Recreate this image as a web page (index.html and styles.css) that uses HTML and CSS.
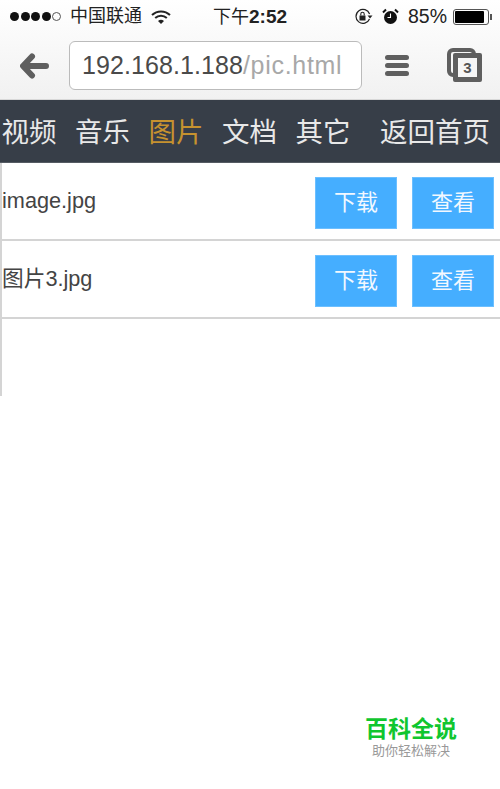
FILE: index.html
```html
<!DOCTYPE html>
<html lang="zh-CN">
  <head>
    <meta charset="utf-8" />
    <meta name="viewport" content="width=device-width, initial-scale=1" />
    <title>图片</title>
    <link rel="stylesheet" href="styles.css">
  </head>
  <body>
    <div class="browser-top">
      <!-- status bar -->
      <div class="status">
        <div class="status-left">
          <span class="signal"><i></i><i></i><i></i><i></i><i class="off"></i></span>
          <span class="carrier">中国联通</span>
          <svg class="wifi" width="20" height="14" viewBox="0 0 20 14">
            <path d="M1 5 A13 13 0 0 1 19 5" fill="none" stroke="#222" stroke-width="2" />
            <path d="M4.2 8 A8.5 8.5 0 0 1 15.8 8" fill="none" stroke="#222" stroke-width="2" />
            <path d="M7 11 A4.5 4.5 0 0 1 13 11 L10 14 Z" fill="#222" />
          </svg>
        </div>
        <div class="clock">下午<b>2:52</b></div>
        <div class="status-right">
          <svg width="19" height="17" viewBox="0 0 19 17">
            <path d="M15.5 11 A7 7 0 1 1 15.6 6" fill="none" stroke="#222" stroke-width="1.2" />
            <path d="M13.5 7.5 L18.5 7.5 L16 10.5 Z" fill="#222" />
            <rect x="5.5" y="7.5" width="6" height="5" fill="#222" />
            <path d="M6.8 7.5 V6 A1.7 1.7 0 0 1 10.2 6 V7.5" fill="none" stroke="#222" stroke-width="1.1" />
          </svg>
          <svg class="alarm" width="17" height="17" viewBox="0 0 17 17">
            <circle cx="8.5" cy="9.5" r="6.5" fill="#111" />
            <path d="M8.5 5.5 V9.5 H5.5" fill="none" stroke="#fff" stroke-width="1.1" />
            <path d="M1 4.5 L4 1.5 M16 4.5 L13 1.5" stroke="#111" stroke-width="2" />
          </svg>
          <span class="percent">85%</span>
          <span class="battery"><span class="level"></span></span>
          <span class="battery-tip"></span>
        </div>
      </div>
      <!-- address bar -->
      <div class="toolbar">
        <svg class="back" width="30" height="26" viewBox="0 0 30 26">
          <path d="M12 3.5 L3 13 L12 22.5 M4 13 H26" fill="none" stroke="#5f5f5f" stroke-width="6" stroke-linecap="round" stroke-linejoin="round" />
        </svg>
        <div class="address"><span class="host">192.168.1.188</span><span class="path">/pic.html</span></div>
        <div class="menu-icon"><i></i><i></i><i></i></div>
        <div class="tabs-icon">
          <span class="tab-back"></span>
          <span class="tab-front">3</span>
        </div>
      </div>
    </div>

    <div class="nav">
      <a href="#">视频</a>
      <a href="#">音乐</a>
      <a href="#" class="active">图片</a>
      <a href="#">文档</a>
      <a href="#">其它</a>
      <a href="#" class="home">返回首页</a>
    </div>

    <div class="list">
      <div class="row">
        <span class="name">image.jpg</span>
        <a href="#" class="btn">下载</a>
        <a href="#" class="btn">查看</a>
      </div>
      <div class="row">
        <span class="name">图片3.jpg</span>
        <a href="#" class="btn">下载</a>
        <a href="#" class="btn">查看</a>
      </div>
    </div>

    <div class="brand">
      <div class="brand-name">百科全说</div>
      <div class="brand-sub">助你轻松解决</div>
    </div>
  </body>
</html>
```
FILE: styles.css
```css
html, body {
  margin: 0;
  padding: 0;
}

body {
  width: 500px;
  height: 789px;
  overflow: hidden;
  position: relative;
  background-color: #fff;
  font-family: "Liberation Sans", "Noto Sans CJK SC", sans-serif;
  color: #444;
}

.browser-top {
  height: 99px;
  background: linear-gradient(#ffffff, #f1f1f1);
  border-bottom: 1px solid #d8d8d8;
}

.status {
  height: 33px;
  display: flex;
  align-items: center;
  justify-content: space-between;
  padding: 0 8px 0 10px;
  color: #222;
  position: relative;
}

.status-left, .status-right {
  display: flex;
  align-items: center;
}

.signal {
  display: flex;
  gap: 1.5px;
}

.signal i {
  width: 9px;
  height: 9px;
  border-radius: 50%;
  background-color: #111;
}

.signal i.off {
  box-sizing: border-box;
  background-color: transparent;
  border: 1px solid #555;
}

.carrier {
  font-size: 18px;
  line-height: 24px;
  margin: 0 0 2px 9px;
}

.wifi {
  margin-left: 9px;
}

.clock {
  position: absolute;
  left: 213px;
  top: 5px;
  font-size: 18px;
  line-height: 24px;
}

.clock b {
  font-size: 19px;
}

.status-right svg {
  margin-right: 9px;
}

.percent {
  font-size: 19.5px;
  margin-right: 6px;
}

.battery {
  box-sizing: border-box;
  width: 36px;
  height: 16px;
  border: 1px solid #555;
  border-radius: 3px;
  padding: 1px;
  display: flex;
}

.level {
  width: 29px;
  background-color: #000;
  border-radius: 1px;
}

.battery-tip {
  width: 2px;
  height: 6px;
  background-color: #555;
  margin-left: 1px;
}

.toolbar {
  height: 66px;
  display: flex;
  align-items: flex-start;
  position: relative;
}

.back {
  margin: 20px 0 0 20px;
}

.address {
  box-sizing: border-box;
  width: 293px;
  height: 49px;
  margin: 8px 0 0 19px;
  border: 1px solid #bbb;
  border-radius: 6px;
  background-color: #fff;
  font-size: 25px;
  line-height: 47px;
  padding-left: 12px;
  white-space: nowrap;
}

.host {
  color: #4a4a4a;
  letter-spacing: 0.08px;
}

.path {
  color: #a8a8a8;
  letter-spacing: 0.7px;
}

.menu-icon {
  margin: 22px 0 0 23px;
  display: flex;
  flex-direction: column;
  gap: 3px;
}

.menu-icon i {
  width: 24px;
  height: 5px;
  border-radius: 3px;
  background-color: #5f5f5f;
}

.tabs-icon {
  position: absolute;
  left: 447px;
  top: 15px;
  width: 35px;
  height: 34px;
}

.tab-back {
  position: absolute;
  left: 0;
  top: 0;
  box-sizing: border-box;
  width: 29px;
  height: 29px;
  border: 4px solid #5f5f5f;
  border-radius: 6px;
}

.tab-front {
  position: absolute;
  left: 6px;
  top: 5px;
  box-sizing: border-box;
  width: 29px;
  height: 29px;
  border: 5px solid #5f5f5f;
  border-radius: 2px;
  background-color: #f6f6f6;
  font-size: 15px;
  font-weight: bold;
  line-height: 19px;
  text-align: center;
  color: #555;
}

.nav {
  height: 63px;
  box-sizing: border-box;
  background-color: #373e48;
  border-bottom: 1px solid #555b63;
  display: flex;
  align-items: center;
  padding: 0 0 2px 1.5px;
  font-size: 27.5px;
}

.nav a {
  color: #e8e8e8;
  text-decoration: none;
  margin-right: 18.5px;
  white-space: nowrap;
}

.nav a.active {
  color: #c6922f;
}

.nav a.home {
  margin-left: 11px;
  margin-right: 0;
}

.list {
  height: 233px;
  border-left: 2px solid #d4d4d4;
}

.row {
  box-sizing: border-box;
  height: 78px;
  border-bottom: 2px solid #d4d4d4;
  display: flex;
  align-items: center;
  gap: 15px;
  padding: 3px 6px 0 0;
}

.name {
  flex: 1;
  margin-bottom: 3px;
  font-size: 21.7px;
  line-height: 26px;
  color: #444;
}

.btn {
  box-sizing: border-box;
  width: 82px;
  height: 52px;
  border: 1px solid #6cbfff;
  background-color: #45aeff;
  color: #f2f8ff;
  font-size: 22px;
  line-height: 50px;
  text-align: center;
  text-decoration: none;
}

.brand {
  position: absolute;
  left: 361px;
  top: 715px;
  width: 100px;
  text-align: center;
}

.brand-name {
  font-size: 23px;
  line-height: 28px;
  font-weight: bold;
  color: #10c62f;
}

.brand-sub {
  font-size: 13px;
  line-height: 16px;
  color: #999;
}
```
